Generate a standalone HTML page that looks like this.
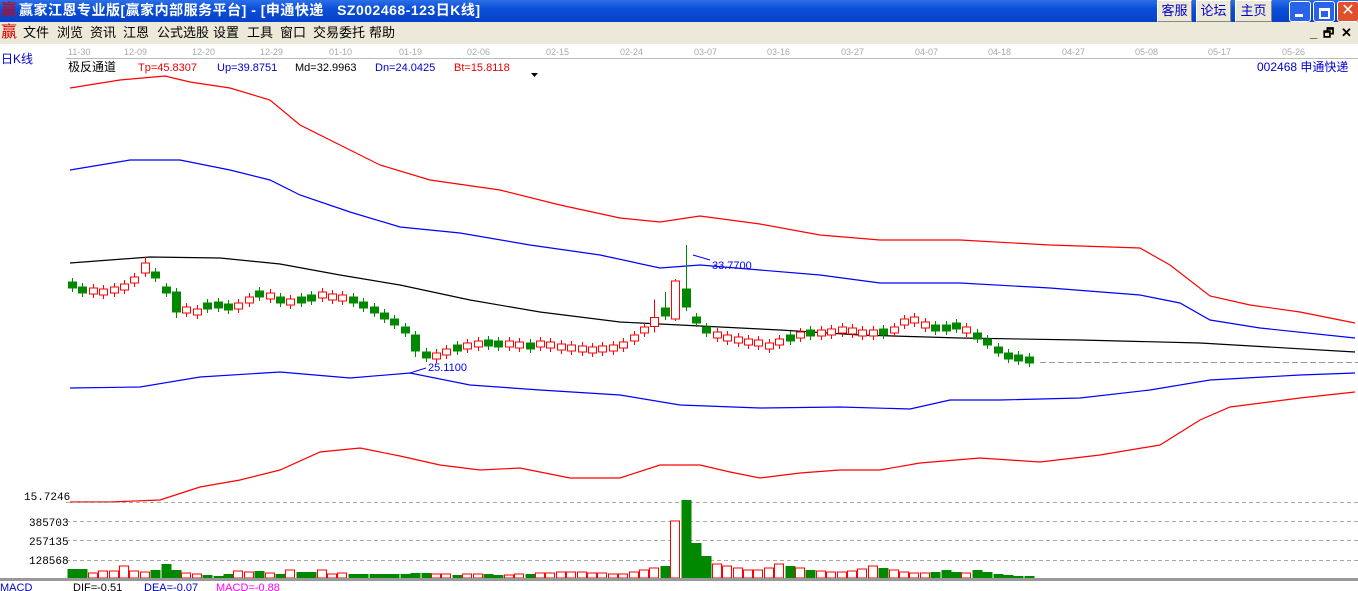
<!DOCTYPE html>
<html><head><meta charset="utf-8"><style>
body{margin:0;width:1358px;height:591px;overflow:hidden;background:#fff;font-family:"Liberation Sans","Noto Sans CJK SC",sans-serif;position:relative}
#title{position:absolute;left:0;top:0;width:1358px;height:22px;background:linear-gradient(#2d6ee8,#0a50d8 40%,#0840c8);color:#fff;font-size:14px;line-height:21px}
#menu{position:absolute;left:0;top:22px;width:1358px;height:22px;background:#ece9d8;font-size:13px;line-height:22px}
.btn{position:absolute;top:0;height:20px;background:#ece9d8;border:1px solid #fff;border-right-color:#888;border-bottom-color:#888;color:#00c;font-size:13px;text-align:center;line-height:20px;font-weight:normal}
.wb{position:absolute;top:1px;width:20px;height:19px;border:1px solid #fff;border-radius:3px;background:#2a63e8}
.s{position:absolute;white-space:nowrap}
</style></head><body>
<div id="title"><span class="s" style="left:1px;top:0;color:#d00;font-size:16px">赢</span><span class="s" style="left:19px;letter-spacing:0.5px;font-weight:bold">赢家江恩专业版[赢家内部服务平台] - [申通快递&nbsp;&nbsp;&nbsp;SZ002468-123日K线]</span>
<div class="btn" style="left:1157px;width:33px">客服</div>
<div class="btn" style="left:1196px;width:33px">论坛</div>
<div class="btn" style="left:1235px;width:35px">主页</div>
<div class="wb" style="left:1289px"><div style="position:absolute;left:5px;top:12px;width:8px;height:3px;background:#fff"></div></div>
<div class="wb" style="left:1313px"><div style="position:absolute;left:5px;top:6px;width:7px;height:6px;border:2px solid #fff;border-top-width:3px"></div></div>
<div class="wb" style="left:1337px;background:#e0502a;color:#fff;text-align:center;font-size:16px;line-height:18px">✕</div>
</div>
<div id="menu"><span class="s" style="left:1px;color:#d00;font-size:16px">赢</span>
<span class="s" style="left:23px">文件</span><span class="s" style="left:57px">浏览</span><span class="s" style="left:90px">资讯</span><span class="s" style="left:123px">江恩</span><span class="s" style="left:157px">公式选股</span><span class="s" style="left:213px">设置</span><span class="s" style="left:247px">工具</span><span class="s" style="left:280px">窗口</span><span class="s" style="left:313px">交易委托</span><span class="s" style="left:369px">帮助</span>
<span class="s" style="left:1310px;top:0;font-weight:bold">_</span><span class="s" style="left:1323px;font-size:12px;font-weight:bold">🗗</span><span class="s" style="left:1341px;font-weight:bold">✕</span>
</div>
<svg style="position:absolute;left:0;top:0" width="1358" height="591" font-family="Liberation Sans, Noto Sans CJK SC, sans-serif">
<g font-size="9" fill="#aaa">
<text x="68" y="55">11-30</text><text x="124" y="55">12-09</text><text x="192" y="55">12-20</text><text x="260" y="55">12-29</text><text x="329" y="55">01-10</text><text x="399" y="55">01-19</text><text x="467" y="55">02-06</text><text x="546" y="55">02-15</text><text x="620" y="55">02-24</text><text x="694" y="55">03-07</text><text x="767" y="55">03-16</text><text x="841" y="55">03-27</text><text x="915" y="55">04-07</text><text x="988" y="55">04-18</text><text x="1062" y="55">04-27</text><text x="1135" y="55">05-08</text><text x="1208" y="55">05-17</text><text x="1282" y="55">05-26</text>
</g>
<line x1="66" y1="58.5" x2="1358" y2="58.5" stroke="#bbb"/>
<text x="1" y="63" font-size="12" fill="#00c">日K线</text>
<text x="68" y="71" font-size="12" fill="#000">极反通道</text>
<text x="138" y="71" font-size="11" fill="#e00">Tp=45.8307</text>
<text x="217" y="71" font-size="11" fill="#00c">Up=39.8751</text>
<text x="295" y="71" font-size="11" fill="#000">Md=32.9963</text>
<text x="375" y="71" font-size="11" fill="#00c">Dn=24.0425</text>
<text x="454" y="71" font-size="11" fill="#e00">Bt=15.8118</text>
<path d="M531 73h7l-3.5 4z" fill="#000"/>
<text x="1257" y="71" font-size="12" fill="#00c">002468  申通快递</text>
<g fill="none" stroke-width="1.2">
<polyline stroke="#f00" points="70,88 120,80 165,76 190,82 230,88 270,100 300,125 340,145 380,165 430,180 500,190 560,205 620,218 660,222 700,216 760,224 820,235 880,240 960,240 1050,245 1140,248 1170,265 1210,296 1250,305 1300,312 1355,323"/>
<polyline stroke="#00f" points="70,170 130,160 180,160 230,170 270,180 300,195 350,212 400,227 460,233 530,245 600,255 660,268 700,265 760,270 820,275 880,283 960,283 1050,288 1140,295 1180,303 1210,320 1260,328 1355,338"/>
<polyline stroke="#000" points="70,263 150,257 220,258 280,264 340,275 400,285 470,300 540,312 620,322 700,326 780,330 860,335 960,338 1080,340 1200,343 1355,352"/>
<polyline stroke="#00f" points="70,388 140,387 200,377 280,372 350,378 410,373 470,385 540,390 620,395 680,405 760,408 840,407 910,409 950,400 1000,400 1080,398 1150,390 1210,380 1300,375 1355,373"/>
<polyline stroke="#f00" points="70,502 110,502 160,500 200,487 240,480 280,470 320,452 360,448 400,456 440,465 480,470 520,468 570,478 620,478 660,465 700,465 730,472 760,478 800,473 840,470 880,470 920,463 980,458 1040,462 1100,455 1160,445 1200,420 1230,407 1300,398 1355,392"/>
</g>
<line x1="1040" y1="362.5" x2="1358" y2="362.5" stroke="#999" stroke-dasharray="6,3"/>
<g id="c"></g>
<polyline points="693,255 710,260" stroke="#00f" fill="none"/>
<text x="712" y="269" font-size="11" fill="#00f">33.7700</text>
<polyline points="410,373 426,368" stroke="#00f" fill="none"/>
<text x="428" y="371" font-size="11" fill="#00f">25.1100</text>
<g stroke="#aaa" stroke-dasharray="4,3"><line x1="66" y1="502.5" x2="1358" y2="502.5"/><line x1="66" y1="521.5" x2="1358" y2="521.5"/><line x1="66" y1="540.5" x2="1358" y2="540.5"/><line x1="66" y1="560.5" x2="1358" y2="560.5"/></g>
<g font-size="11" fill="#000" font-family="Liberation Mono, monospace"><text x="24" y="500">15.7246</text><text x="29" y="526">385703</text><text x="29" y="545">257135</text><text x="29" y="564">128568</text></g>
<g id="v"></g>
<rect x="0" y="578" width="1358" height="3" fill="#999"/>
<text x="0" y="591" font-size="11" fill="#00c">MACD</text>
<text x="73" y="591" font-size="11" fill="#000">DIF=-0.51</text>
<text x="144" y="591" font-size="11" fill="#00c">DEA=-0.07</text>
<text x="216" y="591" font-size="11" fill="#f0f">MACD=-0.88</text>
</svg>
<script>
var mids=[285,290,291,292,290,287,280,268,275,290,302,310,312,306,305,307,306,300,294,296,300,302,300,298,295,297,298,300,305,310,316,322,330,343,355,356,352,348,346,344,343,344,344,345,346,344,345,347,348,349,350,349,348,345,338,330,322,312,300,298,320,330,335,338,340,342,343,346,342,338,335,333,333,332,330,331,333,333,332,330,322,320,325,328,328,326,330,336,342,350,356,358,360];
var col="ggrrrrrrgggrrgggrrgrgrggrrrggggggggrrgrrggrrgrrrrrrrrrrrrgrgggrrrrrrrgrgrrrrrrgrrrrgggrggggggg";
var vol=[9,9,5,7,7,12,7,6,8,14,8,5,4,3,2,4,7,6,7,5,4,8,6,6,8,4,5,4,4,4,4,4,4,5,5,4,4,3,4,4,4,3,3,4,4,5,5,6,6,6,5,5,4,4,6,8,10,12,57,78,35,22,14,12,10,8,8,10,14,12,10,8,7,6,6,7,9,12,10,8,6,5,5,6,8,6,5,8,6,4,3,2,2];
var h='',vh='',sp=10.4;
for(var i=0;i<mids.length;i++){var x=Math.round(72+i*sp),m=mids[i],r=col[i]=='r',bh=6,wt=4,wb=4;
if(i==58){bh=38;m=300;wt=2;wb=2}if(i==59){bh=18;m=298;wt=44}if(i==57){bh=8;wt=16}if(i==56){bh=9;wt=18;wb=6}if(i==33){bh=16;wb=6}if(i==7){bh=10;wt=6}if(i==10){bh=20;wb=6}
var c=r?'#f00':'#080';
h+='<line x1="'+(x+.5)+'" y1="'+(m-bh/2-wt)+'" x2="'+(x+.5)+'" y2="'+(m+bh/2+wb)+'" stroke="'+c+'"/>';
h+='<rect x="'+(x-3.5)+'" y="'+(m-bh/2)+'" width="8" height="'+bh+'" fill="'+(r?'#fff':c)+'" stroke="'+c+'"/>';
var vv=vol[i];vh+='<rect x="'+(x-4.5)+'" y="'+(578-vv)+'" width="'+(r?9:10)+'" height="'+vv+'" fill="'+(r?'#fff':'#080')+'" stroke="'+(r?'#f00':'none')+'"/>';}
document.getElementById('c').innerHTML=h;document.getElementById('v').innerHTML=vh;
</script>
</body></html>
